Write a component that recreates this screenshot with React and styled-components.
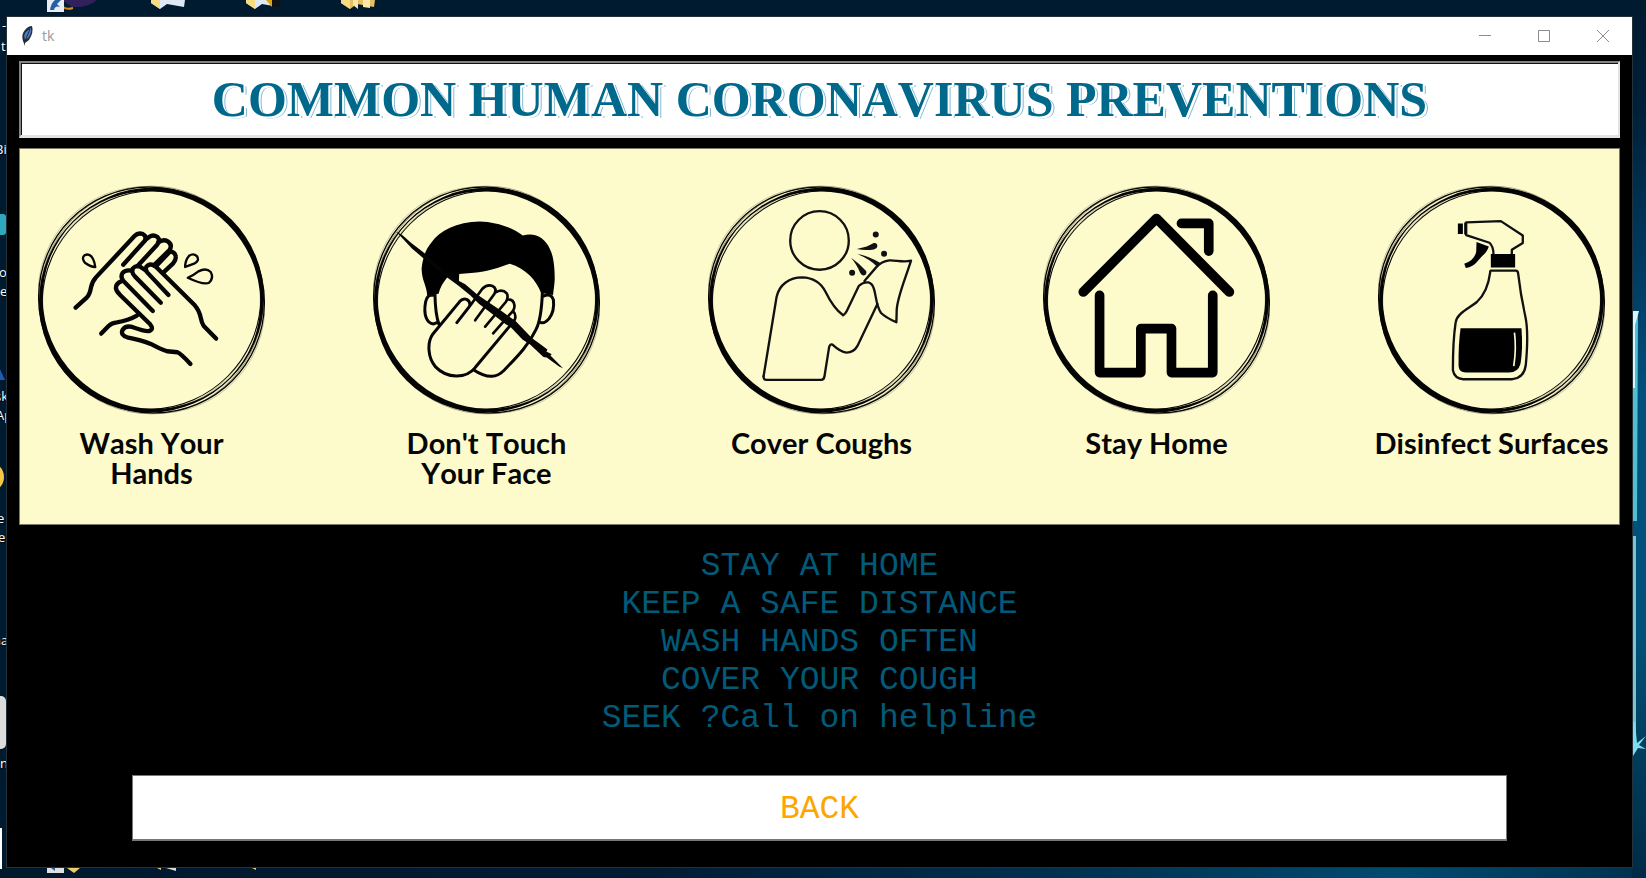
import React from "react";
import styled, { createGlobalStyle } from "styled-components";

const GlobalStyle = createGlobalStyle`
  *, *::before, *::after { box-sizing: border-box; }
  body { margin: 0; background: #001a30; }
`;

const Desktop = styled.div`
  position: relative;
  display: flex;
  min-height: 100vh;
  padding: 16px 13px 10px 6px;
  overflow: hidden;
  background:
    linear-gradient(90deg, #00182c 0%, #001c34 40%, #003150 65%, #004a70 85%, #00304e 100%) bottom / 100% 12px no-repeat,
    #001a30;
`;

const RightGlow = styled.div`
  position: absolute;
  top: 0;
  right: 0;
  width: 14px;
  height: 100%;
  background: linear-gradient(#001a30 0%, #001f38 12%, #003a60 30%, #00507f 45%, #00527a 72%, #00405f 84%, #002a46 100%);
`;

const DesktopArt = styled.svg`
  position: absolute;
  top: ${(p) => (p.$bottom ? "auto" : "0")};
  bottom: ${(p) => (p.$bottom ? "0" : "auto")};
  left: ${(p) => (p.$right ? "auto" : "0")};
  right: ${(p) => (p.$right ? "0" : "auto")};
  display: block;
`;

const IconName = styled.span`
  position: absolute;
  top: ${(p) => p.$y}px;
  left: ${(p) => p.$x}px;
  color: #fff;
  font: 13px/20px "Open Sans", sans-serif;
  text-shadow: 1px 1px 1px #000;
`;

const Window = styled.main`
  position: relative;
  display: flex;
  flex: 1;
  flex-direction: column;
  border: 1px solid #26323a;
  background: #000;
`;

const TitleBar = styled.header`
  display: flex;
  align-items: center;
  height: 38px;
  padding-left: 14px;
  background: #fff;
`;

const WindowTitle = styled.span`
  flex: 1;
  margin-left: 8px;
  color: #999;
  font: 14px/20px "Open Sans", sans-serif;
`;

const WindowButton = styled.button`
  display: grid;
  place-items: center;
  width: 59px;
  height: 38px;
  padding: 0;
  border: 0;
  background: transparent;
  color: #8c8c8c;
`;

const Content = styled.div`
  display: flex;
  flex: 1;
  flex-direction: column;
  padding: 6px 12px 26px;
`;

const Banner = styled.div`
  height: 77px;
  border: 2px solid;
  border-color: #848284 #e3e3e3 #e3e3e3 #848284;
  border-bottom-width: 3px;
  box-shadow: inset 1px 1px 0 #111;
  background: #fff;
  overflow: hidden;
`;

const Heading = styled.h1`
  margin: 0;
  color: #00688b;
  font: bold 50px/72px "Liberation Serif", serif;
  font-kerning: none;
  text-align: center;
  text-shadow: 1px 1px 0 #fff, 2px 2px 0 #fff, 3px 2px 0 #7fb9d3;
  white-space: nowrap;
`;

const Tips = styled.ul`
  display: flex;
  justify-content: space-between;
  height: 377px;
  margin: 10px 0 0;
  padding: 36px 14px 0 18px;
  border: 1px solid #7b7a64;
  list-style: none;
  background: #fdfacb;
`;

const Tip = styled.li`
  display: flex;
  flex-direction: column;
  align-items: center;
  gap: 13px;
  width: 227px;
`;

const TipLabel = styled.span`
  color: #050505;
  font: bold 29px/30px Lato, sans-serif;
  font-kerning: none;
  text-align: center;
  white-space: pre;
`;

const Advice = styled.ul`
  margin: 23px 0 0;
  padding: 0;
  list-style: none;
  color: #005a78;
  font: 33px/38px "Liberation Mono", monospace;
  text-align: center;
`;

const BackButton = styled.button`
  height: 66px;
  margin: auto 113px 0;
  padding: 4px 0 0;
  border: 1px solid #777;
  border-bottom: 2px solid #777;
  background: #fff;
  color: #ffa500;
  font: 33px/38px "Liberation Mono", monospace;
`;

function Ring() {
  return (
    <g transform="translate(341 345)" fill="none" stroke="#050505">
      <g transform="rotate(45)">
        <path
          fill="#050505"
          stroke="none"
          fillRule="evenodd"
          d="M-335 0A335 341 0 0 1 335 0A335 341 0 0 1-335 0ZM-331 0A331 323 0 0 0 331 0A331 323 0 0 0-331 0Z"
        />
        <ellipse rx="324" ry="333" strokeWidth="3" />
        <ellipse rx="343" ry="335" strokeWidth="4" />
        <ellipse rx="349" ry="333" strokeWidth="1" opacity=".6" />
      </g>
      <ellipse rx="336" ry="342" strokeWidth="2" opacity=".6" />
      <ellipse rx="326" ry="333" strokeWidth="2" opacity=".3" transform="rotate(20)" />
    </g>
  );
}

function WashHands() {
  return (
    <g fill="none" stroke="#050505" strokeWidth="13" strokeLinecap="round" strokeLinejoin="round">
      <path d="M167 414L201 383Q210 374 213 354Q216 337 228 323L344 199Q355 187 369 193Q382 200 375 213L310 285" />
      <path d="M376 211L389 201Q400 193 413 202Q422 211 412 225L353 289" />
      <path d="M415 218Q430 207 444 215Q459 225 449 241L402 287" />
      <path d="M450 244Q467 247 468 261Q469 270 460 281L432 307M447 249L410 288" />
      <path d="M589 507L552 469Q546 461 543 445Q539 423 525 407L409 292Q397 280 384 287Q373 294 382 308L446 376" />
      <path d="M379 303L361 291Q348 286 339 296Q333 307 345 320L423 399" />
      <path d="M337 303Q316 299 308 310Q301 320 310 333L399 424" />
      <path d="M304 335Q288 341 288 355Q289 365 300 375L391 464Q403 478 389 484Q378 487 337 472Q317 467 308 481Q301 497 322 503Q365 511 393 523Q422 539 442 545L473 548Q482 551 512 583" />
      <path d="M351 438Q325 453 291 458Q276 459 266 469L244 492" />
      <g strokeWidth="7">
        <path d="M226 292Q213 292 195 279Q183 264 195 256Q210 250 219 267Q224 276 226 292Z" />
        <path d="M496 292Q496 272 508 258Q521 249 532 260Q540 274 523 282Q508 287 496 292Z" />
        <path d="M504 324Q524 315 536 305Q559 293 573 307Q583 325 568 339Q552 347 504 324Z" />
      </g>
    </g>
  );
}

function NoFaceTouch() {
  return (
    <g fill="none" stroke="#050505" strokeWidth="9" strokeLinecap="round" strokeLinejoin="round">
      <path
        fill="#000"
        stroke="none"
        d="M201 378C199 346 185 334 184 297C187 264 198 236 213 219C239 182 289 156 359 155C406 156 457 173 488 197C526 187 556 205 570 239C582 262 584 302 584 327C583 350 580 361 579 376L543 370C529 331 496 296 449 282C419 292 379 307 341 309L297 313L296 336L262 322C248 339 239 355 235 372Z"
      />
      <path d="M224 370Q225 433 236 464M216 377Q201 374 196 397C189 435 199 462 220 463L230 459" />
      <path d="M547 366Q544 449 528 479C502 533 466 566 432 602Q414 620 395 620Q371 621 341 601" />
      <path d="M551 379Q573 370 580 390Q584 425 567 447Q554 462 543 459" />
      <path d="M290 459L328 410Q332 395 319 389Q308 385 299 395L218 493C200 519 202 564 226 592C260 628 318 628 345 594L445 474" />
      <path d="M331 407L366 358Q381 342 397 349Q411 356 403 372L345 452" strokeWidth="8" />
      <path d="M408 367Q427 357 440 371Q446 383 437 397L375 471M442 389Q461 388 463 407Q464 421 451 432L399 491M460 426Q469 436 464 450L448 471" strokeWidth="8" />
      <path
        fill="#050505"
        stroke="none"
        d="M108 186L125 195L153 220L194 251L262 315L315 344L353 376L424 424L467 455L516 506L542 525L562 540L559 546L575 554L571 558L609 596L597 591L560 564L550 562L510 525L487 510L452 473L437 464L356 402L330 377L293 347L262 324L190 266L155 236Z"
      />
    </g>
  );
}

function CoverCough() {
  return (
    <g fill="none" stroke="#111" strokeWidth="7" strokeLinecap="round" strokeLinejoin="round">
      <circle cx="389" cy="212" r="88" />
      <path d="M221 620L260 382C268 344 299 323 337 323C370 324 393 339 407 366C424 401 437 420 460 437Q467 432 471 424L507 349Q519 337 536 338Q548 341 553 359C560 383 559 409 574 430Q587 443 620 458L621 420C624 379 645 333 664 273C639 279 619 271 599 272C580 274 569 282 559 293L524 334" />
      <path d="M563 403L503 529Q492 549 470 549Q452 547 428 525Q421 522 418 532L404 620Q402 631 394 631H230Q220 631 221 620" />
      <g fill="#111" stroke="none">
        <circle cx="558" cy="194" r="9" />
        <circle cx="583" cy="252" r="9" />
        <circle cx="487" cy="309" r="9" />
        <path d="M501 238L531 230L552 220Q562 218 563 229Q562 237 552 239Q527 243 501 238ZM501 252Q538 259 572 280L562 291Q543 270 501 252ZM484 264Q511 283 529 304Q532 314 524 317Q515 318 511 309Q503 288 484 264Z" />
      </g>
    </g>
  );
}

function StayHome() {
  return (
    <g fill="none" stroke="#000" strokeWidth="29" strokeLinecap="round" strokeLinejoin="round">
      <path d="M159 367L379 146L598 367M454 161H536V244M208 377V609H332V477H424V609H548V377" />
    </g>
  );
}

function SprayBottle() {
  return (
    <g fill="none" stroke="#111" strokeWidth="7" strokeLinejoin="round">
      <path d="M383 253Q383 231 371 219L301 196V158L405 154L471 197V220L438 240V253" />
      <path d="M375 303H450Q456 303 457 311C462 356 468 392 479 442C487 480 485 533 480 587Q475 625 440 629H292Q266 627 261 602C261 552 262 507 269 460C272 431 309 417 333 397C357 375 369 340 373 308Q373 303 375 303Z" />
      <g fill="#000" stroke="none">
        <path d="M276 161H291V193H276ZM295 158H300V194H295ZM332 217L369 230Q364 246 349 259L331 279Q321 291 300 295L295 282Q325 273 331 246ZM375 253H448V293H375Z" />
        <path d="M284 476H467Q472 538 464 583Q457 608 430 609H300Q279 608 278 589Q277 528 284 476Z" />
      </g>
      <path d="M446 489Q452 535 444 590" stroke="#fdfacb" strokeWidth="5" />
    </g>
  );
}

const TIPS = [
  { label: "Wash Your\nHands", Picture: WashHands, left: 54 },
  { label: "Don't Touch\nYour Face", Picture: NoFaceTouch, left: 38 },
  { label: "Cover Coughs", Picture: CoverCough, left: 54 },
  { label: "Stay Home", Picture: StayHome, left: 38 },
  { label: "Disinfect Surfaces", Picture: SprayBottle, left: 36 },
];

const ADVICE = [
  "STAY AT HOME",
  "KEEP A SAFE DISTANCE",
  "WASH HANDS OFTEN",
  "COVER YOUR COUGH",
  "SEEK ?Call on helpline",
];

const ICON_NAMES = [
  ["-", 2, 15],
  ["t", 1, 36],
  ["Bi", -5, 139],
  ["o", -1, 262],
  ["e", 0, 281],
  ["sk", -5, 386],
  ["Ap", -4, 405],
  ["e", -3, 508],
  ["e", -2, 527],
  ["na", -7, 630],
  ["n", 0, 753],
];

function Folder({ x, dark, full }) {
  return (
    <g transform={`translate(${x} 0)`}>
      <path d="M0 0H34L33 7L16 4L9 9L0 3Z" fill={full ? "#e5bf61" : "#dfe8f5"} />
      <path d="M0 0H9V9L0 3Z" fill="#f8db83" />
      {dark && <path d="M26 0H34V7H26Z" fill="#111" />}
      {dark && <path d="M20 0H26V7Z" fill="#d9a514" />}
      {full && <path d="M12 0H17V9L12 5ZM22 0H29V8L22 7Z" fill="#fbe7a8" />}
    </g>
  );
}

export default function App() {
  return (
    <Desktop>
      <GlobalStyle />
      <RightGlow />
      <DesktopArt width="400" height="16" aria-hidden="true">
        <path d="M62 0H97Q88 8 72 7Z" fill="#30205c" />
        <path d="M63 7Q67 10 73 8" stroke="#d58a20" strokeWidth="2" fill="none" />
        <path d="M47 0H64V12H47Z" fill="#e8edf2" />
        <path d="M50 10Q51 3 55 0H61L57 4L60 7Q55 5 54 10Z" fill="#2460a8" />
        <Folder x={151} />
        <Folder x={246} dark />
        <Folder x={341} full />
      </DesktopArt>
      <DesktopArt width="7" height="878" aria-hidden="true">
        <rect x="-6" y="214" width="12" height="21" rx="3" fill="#2fa8bd" />
        <path d="M-4 380L-1 367L5 380Z" fill="#2259b5" />
        <circle cx="-11" cy="477" r="15" fill="#f4c744" />
        <rect x="-12" y="696" width="18" height="53" rx="5" fill="#dcdcdc" />
        <rect y="828" width="2" height="41" fill="#fff" />
      </DesktopArt>
      <DesktopArt width="14" height="878" aria-hidden="true" $right>
        <path d="M0 311H6L5 521H0Z" fill="#4fc0d0" />
        <path d="M0 311H7L3 325V388H0Z" fill="#d8f6fb" />
        <path d="M0 536H4V740H0Z" fill="#7cc4cf" />
        <path d="M0 722H3L5 743L14 736L7 745L14 749L6 748L1 756H0Z" fill="#7fdcec" />
      </DesktopArt>
      <DesktopArt width="400" height="10" aria-hidden="true" $bottom>
        <path d="M47 0H64V5H47Z" fill="#e0e0e0" />
        <path d="M51 0H55V3Z" fill="#2460a8" />
        <path d="M67 0H80L74 5Z" fill="#e8cf6b" />
        <path d="M157 0H161V2ZM252 0H256V2Z" fill="#e8c96b" />
        <path d="M166 0H176V3Z" fill="#dadada" />
      </DesktopArt>
      {ICON_NAMES.map(([text, x, y]) => (
        <IconName key={y} $x={x} $y={y}>{text}</IconName>
      ))}

      <Window>
        <TitleBar>
          <svg width="13" height="20" viewBox="0 0 13 20" aria-hidden="true">
            <path d="M11 0Q13 6 8 14L4 17V20L2 15Q0 8 4 4Q7 0 11 0Z" fill="#272b33" />
            <path d="M10 2Q11 7 7 12L4 14Q2 8 6 5Z" fill="#4d83c4" />
            <path d="M9 3L4 15" stroke="#17284a" />
          </svg>
          <WindowTitle>tk</WindowTitle>
          <WindowButton aria-label="Minimize">
            <svg width="12" height="12"><path d="M0 5.5H12" stroke="currentColor" /></svg>
          </WindowButton>
          <WindowButton aria-label="Maximize">
            <svg width="12" height="12"><path d="M.5.5H11.5V11.5H.5Z" fill="none" stroke="currentColor" /></svg>
          </WindowButton>
          <WindowButton aria-label="Close">
            <svg width="12" height="12"><path d="M0 0L12 12M12 0L0 12" stroke="currentColor" /></svg>
          </WindowButton>
        </TitleBar>

        <Content>
          <Banner>
            <Heading>COMMON HUMAN CORONAVIRUS PREVENTIONS</Heading>
          </Banner>
          <Tips>
            {TIPS.map(({ label, Picture, left }) => (
              <Tip key={label}>
                <svg width="227" height="230" viewBox={`${left} 46 682 690`} aria-hidden="true">
                  <g transform={`translate(${left} 46)`}>
                    <Ring />
                  </g>
                  <Picture />
                </svg>
                <TipLabel>{label}</TipLabel>
              </Tip>
            ))}
          </Tips>
          <Advice>
            {ADVICE.map((line) => (
              <li key={line}>{line}</li>
            ))}
          </Advice>
          <BackButton type="button">BACK</BackButton>
        </Content>
      </Window>
    </Desktop>
  );
}
